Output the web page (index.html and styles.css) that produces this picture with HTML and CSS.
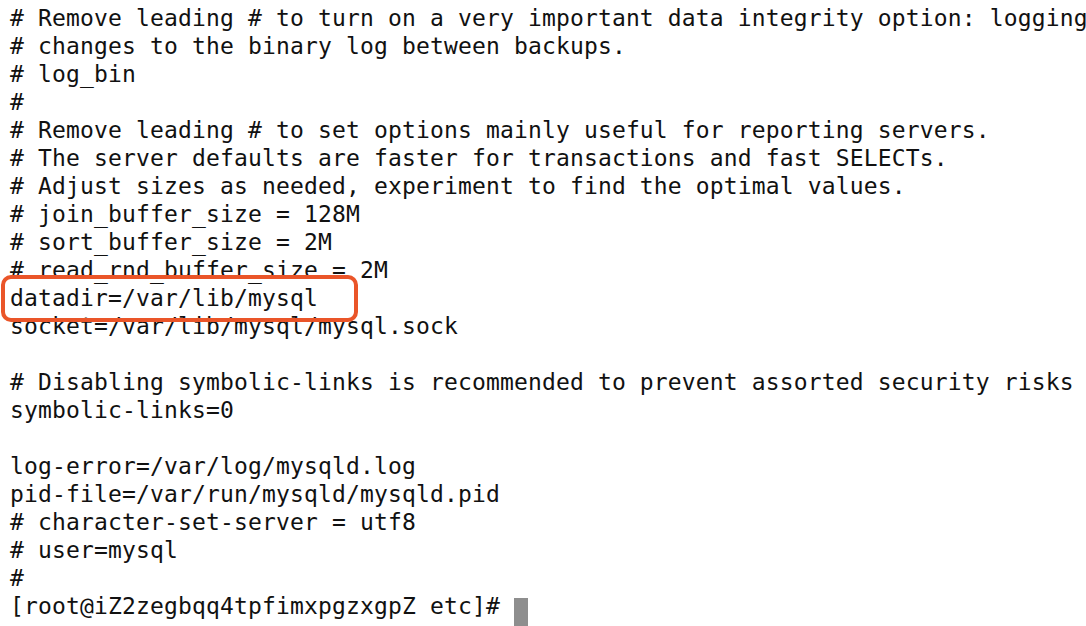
FILE: index.html
```html
<!DOCTYPE html>
<html>
<head>
<meta charset="utf-8">
<link rel="stylesheet" href="styles.css">
</head>
<body>
<div class="term">
<pre class="out"># Remove leading # to turn on a very important data integrity option: logging
# changes to the binary log between backups.
# log_bin
#
# Remove leading # to set options mainly useful for reporting servers.
# The server defaults are faster for transactions and fast SELECTs.
# Adjust sizes as needed, experiment to find the optimal values.
# join_buffer_size = 128M
# sort_buffer_size = 2M
# read_rnd_buffer_size = 2M
datadir=/var/lib/mysql
socket=/var/lib/mysql/mysql.sock

# Disabling symbolic-links is recommended to prevent assorted security risks
symbolic-links=0

log-error=/var/log/mysqld.log
pid-file=/var/run/mysqld/mysqld.pid
# character-set-server = utf8
# user=mysql
#
[root@iZ2zegbqq4tpfimxpgzxgpZ etc]# <span class="cursor"> </span></pre>
<div class="highlight"></div>
</div>
</body>
</html>
```

FILE: styles.css
```css
html, body {
  margin: 0;
  padding: 0;
  background: #ffffff;
}
.term {
  position: relative;
  width: 1086px;
  height: 626px;
  overflow: hidden;
  background: #ffffff;
}
.out {
  margin: 0;
  padding: 4px 0 0 10px;
  font-family: "DejaVu Sans Mono", monospace;
  font-size: 23px;
  letter-spacing: 0.15px;
  line-height: 28px;
  color: #111111;
  white-space: pre;
}
.cursor {
  display: inline-block;
  width: 14px;
  height: 29px;
  vertical-align: -6px;
  background: #8e8e8e;
}
.highlight {
  position: absolute;
  left: 1px;
  top: 275px;
  width: 349px;
  height: 39px;
  border: 4px solid #ea5529;
  border-radius: 10px;
}
```
